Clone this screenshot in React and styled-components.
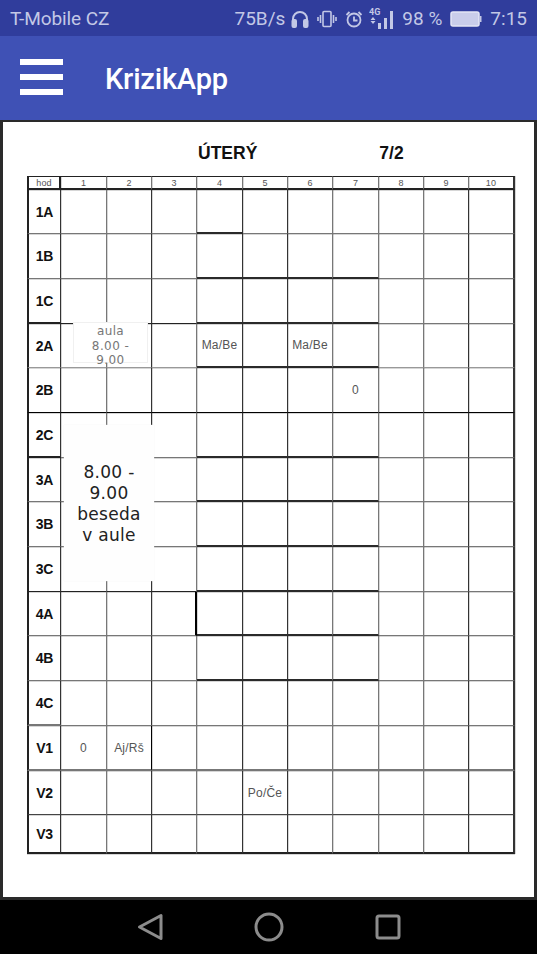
import React from 'react';
import styled, { createGlobalStyle } from 'styled-components';

const GlobalStyle = createGlobalStyle`
  html, body {
    margin: 0;
    padding: 0;
    background: #000;
  }
  * {
    box-sizing: border-box;
  }
`;

const Screen = styled.div`
  width: 537px;
  height: 954px;
  display: flex;
  flex-direction: column;
  overflow: hidden;
  font-family: Roboto, "Liberation Sans", sans-serif;
`;

const StatusBar = styled.div`
  height: 36px;
  flex: none;
  display: flex;
  align-items: center;
  padding: 1px 10px 0;
  background: #303d9c;
  color: #c3c8e6;
  font-size: 19px;
`;

const Carrier = styled.span`
  margin-right: auto;
  letter-spacing: -0.1px;
`;

const StatusText = styled.span`
  margin-left: ${p => p.$gap || 0}px;
  white-space: nowrap;
`;

const StatusIcon = styled.svg`
  flex: none;
  margin-left: ${p => p.$gap || 0}px;
`;

const AppBar = styled.div`
  height: 84px;
  flex: none;
  display: flex;
  align-items: center;
  padding: 0 0 2px 20px;
  background: #3f51b5;
`;

const Burger = styled.div`
  width: 43px;
  display: flex;
  flex-direction: column;
  gap: 8.5px;
`;

const BurgerBar = styled.span`
  display: block;
  height: 6.5px;
  background: #fff;
`;

const AppTitle = styled.h1`
  margin: 3px 0 0 42px;
  color: #fff;
  font-size: 29px;
  font-weight: 500;
  letter-spacing: -0.2px;
`;

const Sheet = styled.div`
  flex: 1;
  display: flex;
  flex-direction: column;
  padding-left: 24px;
  background: #fff;
  border-style: solid;
  border-color: #2a2a2a;
  border-width: 2px 3px 3px;
`;

const TitleRow = styled.div`
  height: 54px;
  flex: none;
  display: flex;
  align-items: center;
  padding: 8px 0 0 171px;
  font-family: "Liberation Sans", Arial, sans-serif;
  font-size: 17.5px;
  font-weight: 700;
  color: #111;
`;

const WeekLabel = styled.span`
  margin-left: 122px;
`;

const Timetable = styled.div`
  position: relative;
  display: grid;
  grid-template-columns: 34px 46px 45px 45px 46px 45px 45px 46px 45px 45px 46px;
  grid-template-rows: 14px 44px 45px 45px 44px 45px 45px 44px 45px 45px 44px 45px 45px 45px 44px 39px;
  width: 487px;
  font-family: "Liberation Sans", Arial, sans-serif;
`;

// the scan blurs every line, the shadow gives the soft second pixel
const Cell = styled.div`
  display: flex;
  align-items: center;
  justify-content: center;
  color: #555;
  font-size: 12px;
  letter-spacing: 0.2px;
  border-right: ${p => p.$right || '1px solid #333'};
  border-bottom: ${p => p.$bottom || '1px solid #777'};
  border-left: ${p => p.$left || 'none'};
  border-top: ${p => p.$top || 'none'};
  box-shadow: 1px 0 0 rgba(0, 0, 0, 0.16), 0 1px 0 rgba(0, 0, 0, 0.16);
`;

const HeadCell = styled(Cell)`
  color: #555;
  font-size: 9px;
  padding-top: 1px;
`;

const RowLabel = styled(Cell)`
  color: #111;
  font-size: 14px;
  font-weight: 700;
  letter-spacing: -0.3px;
  border-left: 2px solid #222;
`;

const SmallNote = styled.div`
  position: absolute;
  left: 46px;
  top: 146px;
  width: 75px;
  height: 41px;
  padding-top: 1px;
  background: #fff;
  border: 1px solid #f0f0f0;
  color: #777;
  font-family: "DejaVu Sans", sans-serif;
  font-size: 12px;
  line-height: 14.5px;
  letter-spacing: 0.4px;
  text-align: center;
  overflow: visible;
`;

const BigNote = styled.div`
  position: absolute;
  left: 37px;
  top: 249px;
  width: 90px;
  height: 156px;
  display: flex;
  align-items: center;
  justify-content: center;
  padding-top: 2px;
  background: #fefefe;
  box-shadow: 0 0 1px #eee;
  color: #222;
  font-family: "DejaVu Sans", sans-serif;
  font-size: 17px;
  line-height: 21px;
  letter-spacing: 0.3px;
  text-align: center;
`;

const NavBar = styled.div`
  height: 54px;
  flex: none;
  display: flex;
  align-items: center;
  justify-content: center;
  gap: 91px;
  background: #000;
`;

const NavIcon = styled.svg`
  flex: none;
  fill: none;
  stroke: #8c8c8c;
  stroke-width: 3;
  stroke-linejoin: round;
`;

const GREY = '1px solid #777';
const LIGHT = '1px solid #999';
const DARK = '1px solid #222';
const BLACK = '1px solid #000';
const STRONG = '2px solid #2a2a2a';
const HEAVY = '2px solid #222';

// line colours under each row: base, then the stronger piece over columns from..to
const rows = [
  { label: '1A', line: GREY, strong: [4, 4] },
  { label: '1B', line: GREY, strong: [4, 7] },
  { label: '1C', line: DARK, strong: [4, 7], soft: [8, 10], labelLine: HEAVY },
  { label: '2A', line: LIGHT, strong: [4, 7] },
  { label: '2B', line: BLACK },
  { label: '2C', line: GREY, strong: [4, 7], labelLine: HEAVY },
  { label: '3A', line: GREY, strong: [4, 7] },
  { label: '3B', line: GREY, strong: [4, 7] },
  { label: '3C', line: DARK, strong: [4, 7], soft: [8, 10] },
  { label: '4A', line: GREY, strong: [4, 7] },
  { label: '4B', line: GREY, strong: [4, 7] },
  { label: '4C', line: GREY, labelLine: '2px solid #777' },
  { label: 'V1', line: '2px solid #777' },
  { label: 'V2', line: '1px solid #444' },
  { label: 'V3', line: '2px solid #222' },
];

const entries = {
  '2A-4': 'Ma/Be',
  '2A-6': 'Ma/Be',
  '2B-7': '0',
  'V1-1': '0',
  'V1-2': 'Aj/Rš',
  'V2-5': 'Po/Če',
};

const hours = [1, 2, 3, 4, 5, 6, 7, 8, 9, 10];

// the vertical lines alternate between dark and grey in the scan
const columnLine = col => {
  if (col === 10) return '2px solid #333';
  return [1, 3, 6, 7, 8].includes(col) ? '1px solid #777' : '1px solid #333';
};

function bottomLine(row, col) {
  if (row.strong && col >= row.strong[0] && col <= row.strong[1]) return STRONG;
  if (row.soft && col >= row.soft[0] && col <= row.soft[1]) return GREY;
  return row.line;
}

function rightLine(row, col) {
  if (row.label === 'V1' && col === 2) return BLACK;
  if (row.label === '4A' && col === 3) return '2px solid #000';
  return columnLine(col);
}

function StatusIcons() {
  return (
    <>
      <StatusIcon $gap={6} width="18" height="18" viewBox="0 0 18 18" fill="none" stroke="#c3c8e6" strokeWidth="2">
        <path d="M2 12V9a7 7 0 0 1 14 0v3" />
        <rect x="1.5" y="10" width="3.5" height="7" rx="1" fill="#c3c8e6" />
        <rect x="13" y="10" width="3.5" height="7" rx="1" fill="#c3c8e6" />
      </StatusIcon>
      <StatusIcon $gap={8} width="20" height="18" viewBox="0 0 20 18" fill="none" stroke="#c3c8e6" strokeWidth="1.6">
        <rect x="6" y="1.5" width="8" height="15" rx="1" />
        <path d="M3.5 5v8M1 7v4M16.5 5v8M19 7v4" />
      </StatusIcon>
      <StatusIcon $gap={8} width="18" height="18" viewBox="0 0 18 18" fill="none" stroke="#c3c8e6" strokeWidth="1.8">
        <circle cx="9" cy="10" r="6.5" />
        <path d="M9 6.5V10.5H12.5M1.5 5l3-3M16.5 5l-3-3" />
      </StatusIcon>
      <StatusIcon $gap={6} width="28" height="24" viewBox="0 0 28 24" fill="#c3c8e6">
        <text x="0" y="8" fontSize="9" fontWeight="700" fontFamily="Roboto, sans-serif">4G</text>
        <path d="M4 10l2.5 3H1.5zM4 17l-2.5-3h5z" />
        <rect x="9" y="16" width="3" height="6" />
        <rect x="15" y="11" width="3" height="11" />
        <rect x="21" y="4" width="3" height="18" />
      </StatusIcon>
      <StatusText $gap={5}>98 %</StatusText>
      <StatusIcon $gap={8} width="32" height="16" viewBox="0 0 32 16">
        <rect x="1" y="1" width="28" height="14" rx="2" fill="#c9cdea" stroke="#e4e6f5" strokeWidth="1.5" />
        <rect x="29.5" y="5" width="2" height="6" fill="#c3c8e6" />
      </StatusIcon>
      <StatusText $gap={8}>7:15</StatusText>
    </>
  );
}

function App() {
  return (
    <Screen>
      <GlobalStyle />
      <StatusBar>
        <Carrier>T-Mobile CZ</Carrier>
        <StatusText>75B/s</StatusText>
        <StatusIcons />
      </StatusBar>
      <AppBar>
        <Burger>
          <BurgerBar />
          <BurgerBar />
          <BurgerBar />
        </Burger>
        <AppTitle>KrizikApp</AppTitle>
      </AppBar>
      <Sheet>
        <TitleRow>
          <span>ÚTERÝ</span>
          <WeekLabel>7/2</WeekLabel>
        </TitleRow>
        <Timetable>
          <HeadCell $left="2px solid #222" $top="1px solid #222" $right="2px solid #222" $bottom="2px solid #222">hod</HeadCell>
          {hours.map(h => (
            <HeadCell key={h} $top="1px solid #222" $right={h === 10 ? '2px solid #333' : '1px solid #777'} $bottom="2px solid #222">{h}</HeadCell>
          ))}
          {rows.map(row => (
            <React.Fragment key={row.label}>
              <RowLabel $bottom={row.labelLine || row.line}>{row.label}</RowLabel>
              {hours.map(col => (
                <Cell key={col} $right={rightLine(row, col)} $bottom={bottomLine(row, col)}>
                  {entries[`${row.label}-${col}`]}
                </Cell>
              ))}
            </React.Fragment>
          ))}
          <SmallNote>aula<br />8.00 -<br />9.00</SmallNote>
          <BigNote>8.00 -<br />9.00<br />beseda<br />v aule</BigNote>
        </Timetable>
      </Sheet>
      <NavBar>
        <NavIcon width="26" height="28" viewBox="0 0 26 28">
          <path d="M24 2.5V25.5L2.5 14Z" />
        </NavIcon>
        <NavIcon width="30" height="30" viewBox="0 0 30 30">
          <circle cx="15" cy="15" r="13" />
        </NavIcon>
        <NavIcon width="26" height="26" viewBox="0 0 26 26">
          <rect x="2" y="2" width="22" height="22" rx="2" />
        </NavIcon>
      </NavBar>
    </Screen>
  );
}

export default App;
